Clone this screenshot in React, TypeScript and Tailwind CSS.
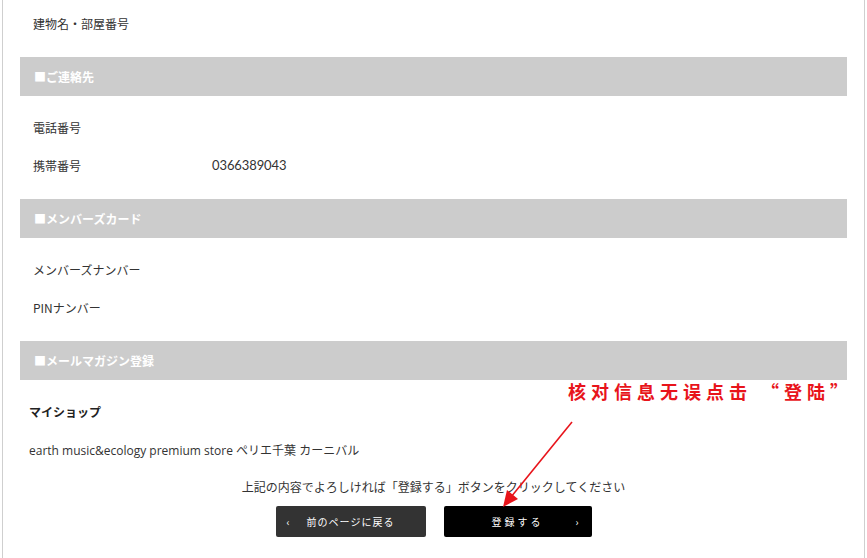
import React from 'react';

const jp = { fontFamily: '"Noto Sans CJK JP", "Noto Sans", sans-serif' };

const SectionBar = ({ title }: { title: string }) => (
  <div className="flex h-[39px] items-center bg-[#cccccc] px-[14px] text-[12px] font-bold text-white">
    {title}
  </div>
);

const Row = ({ label, value }: { label: string; value?: string }) => (
  <div className="flex h-[38px] items-center px-[13px] text-[12px] text-[#333]">
    <span className="w-[179px]">{label}</span>
    {value && <span className="text-[13px] tracking-[-0.1px]" style={{ fontFamily: '"Lato", "Open Sans", sans-serif' }}>{value}</span>}
  </div>
);

export default function App() {
  return (
    <div className="relative h-[558px] w-[867px] overflow-hidden bg-white" style={jp}>
      <div className="mx-[2px] h-full border-x border-[#cfcfcf] px-[17px] pt-[5px]">
        <Row label="建物名・部屋番号" />
        <div className="mt-[14px]">
          <SectionBar title="■ご連絡先" />
        </div>
        <div className="py-[13px] pb-[14px]">
          <Row label="電話番号" />
          <Row label="携帯番号" value="0366389043" />
        </div>
        <SectionBar title="■メンバーズカード" />
        <div className="py-[13px] pb-[14px]">
          <Row label="メンバーズナンバー" />
          <Row label="PINナンバー" />
        </div>
        <SectionBar title="■メールマガジン登録" />
        <div className="pt-[13px]">
          <div className="flex h-[38px] items-center px-[9px] text-[12px] font-bold text-[#222]">マイショップ</div>
          <div
            className="mt-[1px] flex h-[38px] items-center px-[9px] text-[12px] text-[#333]"
            style={{ fontFamily: '"Open Sans", "Noto Sans CJK JP", sans-serif' }}
          >
            earth music&amp;ecology premium store ペリエ千葉 カーニバル
          </div>
          <p className="mt-[8px] text-center text-[12px] text-[#333]">
            上記の内容でよろしければ「登録する」ボタンをクリックしてください
          </p>
          <div className="mt-[10px] flex justify-center gap-[18px]">
            <button className="relative flex h-[31px] w-[150px] items-center justify-center rounded-[2px] bg-[#333333] text-[10px] tracking-[1px] text-white">
              <span className="absolute left-[11px] text-[10px]">‹</span>
              前のページに戻る
            </button>
            <button className="relative flex h-[31px] w-[148px] items-center justify-center rounded-[2px] bg-black text-[10px] tracking-[3px] text-white">
              登録する
              <span className="absolute right-[10px] text-[10px]">›</span>
            </button>
          </div>
        </div>
      </div>

      <div
        className="absolute left-[566px] top-[380px] bg-white px-[2px] text-[18px] font-bold leading-[22px] tracking-[5px] text-[#e8141b]"
        style={{ fontFamily: '"Noto Sans CJK SC", sans-serif' }}
      >
        核对信息无误点击 “登陆”
      </div>

      <svg className="pointer-events-none absolute left-0 top-0" width="867" height="558">
        <line x1="572" y1="422" x2="511" y2="497" stroke="#e8141b" strokeWidth="1.6" />
        <polygon points="503,507 507,490 518,499" fill="#e8141b" />
      </svg>
    </div>
  );
}
